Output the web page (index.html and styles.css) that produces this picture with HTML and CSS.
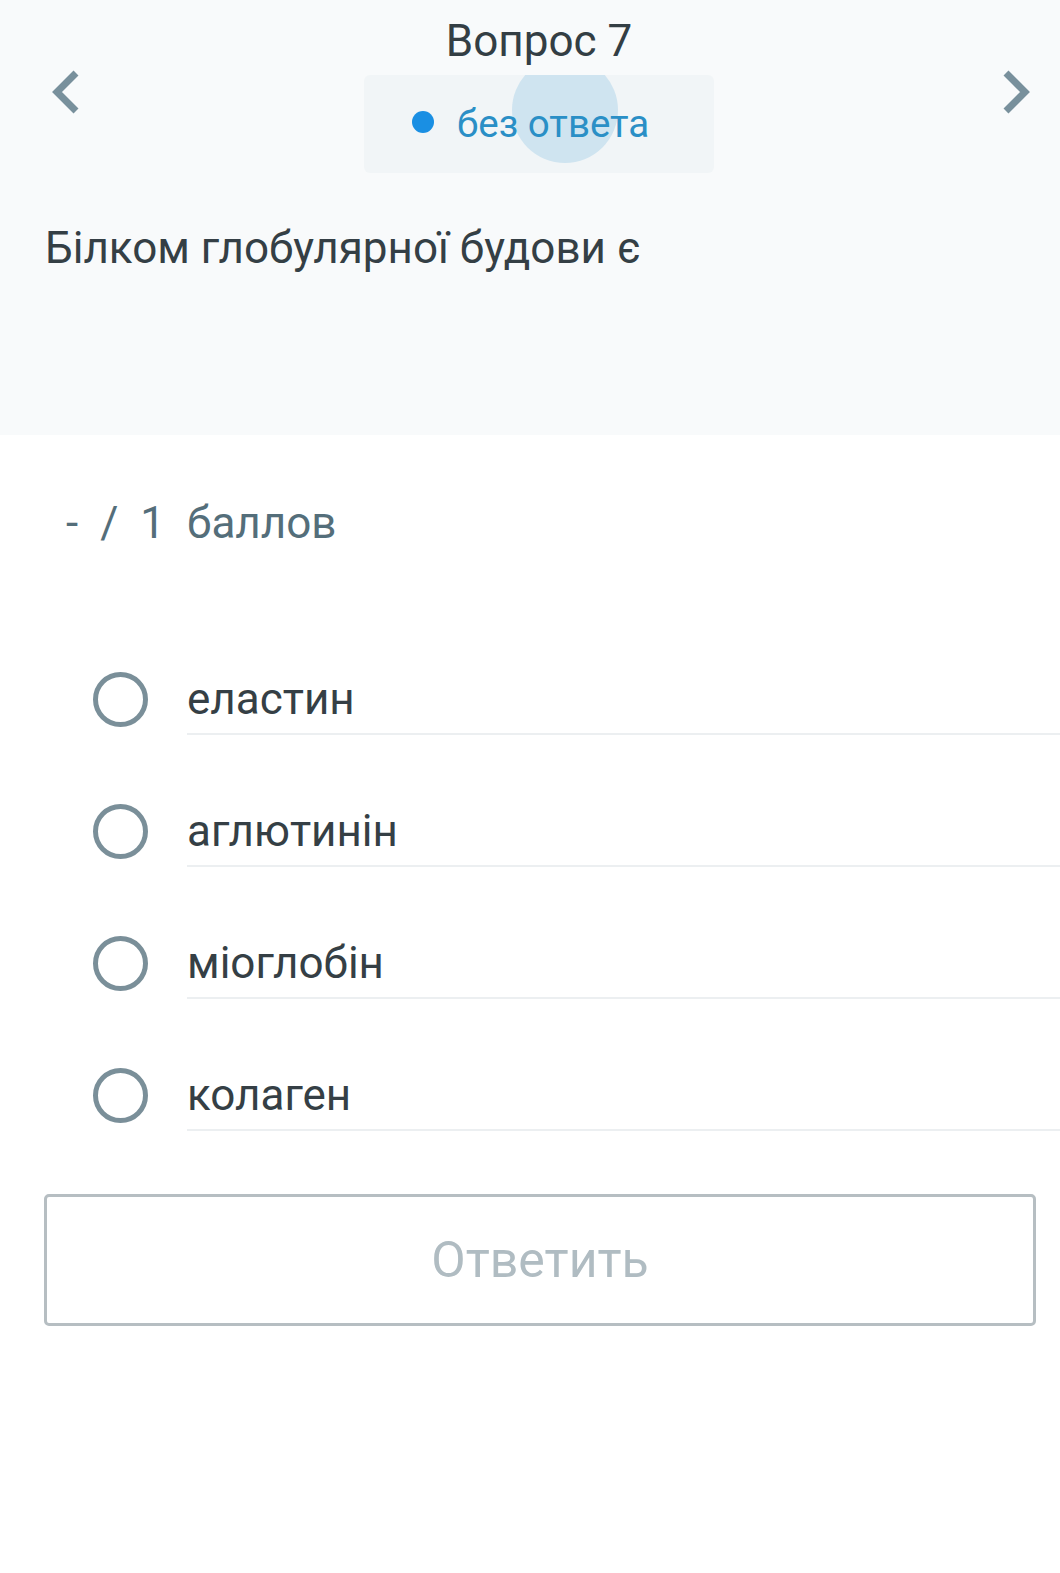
FILE: index.html
```html
<!DOCTYPE html>
<html lang="uk">
<head>
<meta charset="utf-8">
<title>Вопрос 7</title>
<link rel="stylesheet" href="styles.css">
</head>
<body>
<div class="page">
  <header class="header">
    <div class="top">
      <button class="nav nav-prev" aria-label="Назад">
        <svg width="30" height="46" viewBox="0 0 30 46"><path d="M24 4 L5 23 L24 42" fill="none" stroke="#78909c" stroke-width="7" stroke-linejoin="miter"/></svg>
      </button>
      <div class="center">
        <div class="title">Вопрос 7</div>
        <div class="status">
          <span class="ripple"></span>
          <span class="dot"></span>
          <span class="status-text">без ответа</span>
        </div>
      </div>
      <button class="nav nav-next" aria-label="Вперед">
        <svg width="30" height="46" viewBox="0 0 30 46"><path d="M6 4 L25 23 L6 42" fill="none" stroke="#78909c" stroke-width="7" stroke-linejoin="miter"/></svg>
      </button>
    </div>
    <div class="question">Білком глобулярної будови є</div>
  </header>

  <main class="body">
    <div class="score">
      <span>-</span><span>/</span><span>1</span><span>баллов</span>
    </div>
    <ul class="options">
      <li class="option"><span class="radio"></span><span class="label">еластин</span></li>
      <li class="option"><span class="radio"></span><span class="label">аглютинін</span></li>
      <li class="option"><span class="radio"></span><span class="label">міоглобін</span></li>
      <li class="option"><span class="radio"></span><span class="label">колаген</span></li>
    </ul>
    <button class="submit">Ответить</button>
  </main>
</div>
</body>
</html>
```

FILE: styles.css
```css
* { box-sizing: border-box; }
html, body { margin: 0; padding: 0; }
body {
  background: #ffffff;
  font-family: Roboto, "Noto Sans", "Liberation Sans", sans-serif;
  width: 1060px;
}
button { font-family: inherit; }

.header {
  background: #f8fafb;
  padding: 15px 0 160px 0;
}
.top {
  display: grid;
  grid-template-columns: 1fr 350px 1fr;
  padding-left: 18px;
}
.nav {
  background: none;
  border: 0;
  padding: 0;
  width: 30px;
  height: 46px;
  margin-top: 54px;
  align-self: start;
  display: block;
}
.nav svg { display: block; }
.nav-prev { justify-self: start; margin-left: 34px; }
.nav-next { justify-self: end; margin-right: 30px; }

.center { display: flex; flex-direction: column; align-items: stretch; }
.title {
  font-size: 44px;
  line-height: 53px;
  color: #333e44;
  text-align: center;
}
.status {
  position: relative;
  overflow: hidden;
  margin-top: 7px;
  height: 98px;
  background: #f1f5f7;
  border-radius: 6px;
  display: flex;
  align-items: center;
  padding-left: 48px;
}
.ripple {
  position: absolute;
  left: 148px;
  top: -18px;
  width: 106px;
  height: 106px;
  border-radius: 50%;
  background: #cfe4f0;
}
.dot {
  position: relative;
  width: 22px;
  height: 22px;
  border-radius: 50%;
  background: #1a8fe3;
  margin-bottom: 4px;
}
.status-text {
  position: relative;
  margin-left: 23px;
  font-size: 38.5px;
  line-height: 46px;
  color: #2a8fc6;
}
.question {
  margin: 49px 0 0 45px;
  font-size: 44px;
  line-height: 53px;
  color: #343f45;
}

.body { padding: 0; }
.score {
  margin: 62px 0 0 66px;
  display: flex;
  gap: 22px;
  font-size: 44px;
  line-height: 53px;
  color: #546e7a;
}
.options {
  list-style: none;
  margin: 53px 0 0 0;
  padding: 0;
}
.option {
  height: 132px;
  display: flex;
  align-items: stretch;
}
.radio {
  flex: none;
  align-self: flex-end;
  width: 55px;
  height: 55px;
  margin: 0 0 8px 93px;
  border: 5px solid #7a8f99;
  border-radius: 50%;
}
.label {
  flex: 1;
  margin-left: 39px;
  display: flex;
  align-items: flex-end;
  padding-bottom: 6px;
  border-bottom: 2px solid #eceff1;
  font-size: 44px;
  line-height: 55px;
  color: #353f45;
}
.submit {
  display: flex;
  align-items: center;
  justify-content: center;
  margin: 63px 0 0 44px;
  width: 992px;
  height: 132px;
  background: #ffffff;
  border: 3px solid #b6bec2;
  border-radius: 5px;
  font-size: 50px;
  color: #b0bcc2;
  padding: 0;
}
```
